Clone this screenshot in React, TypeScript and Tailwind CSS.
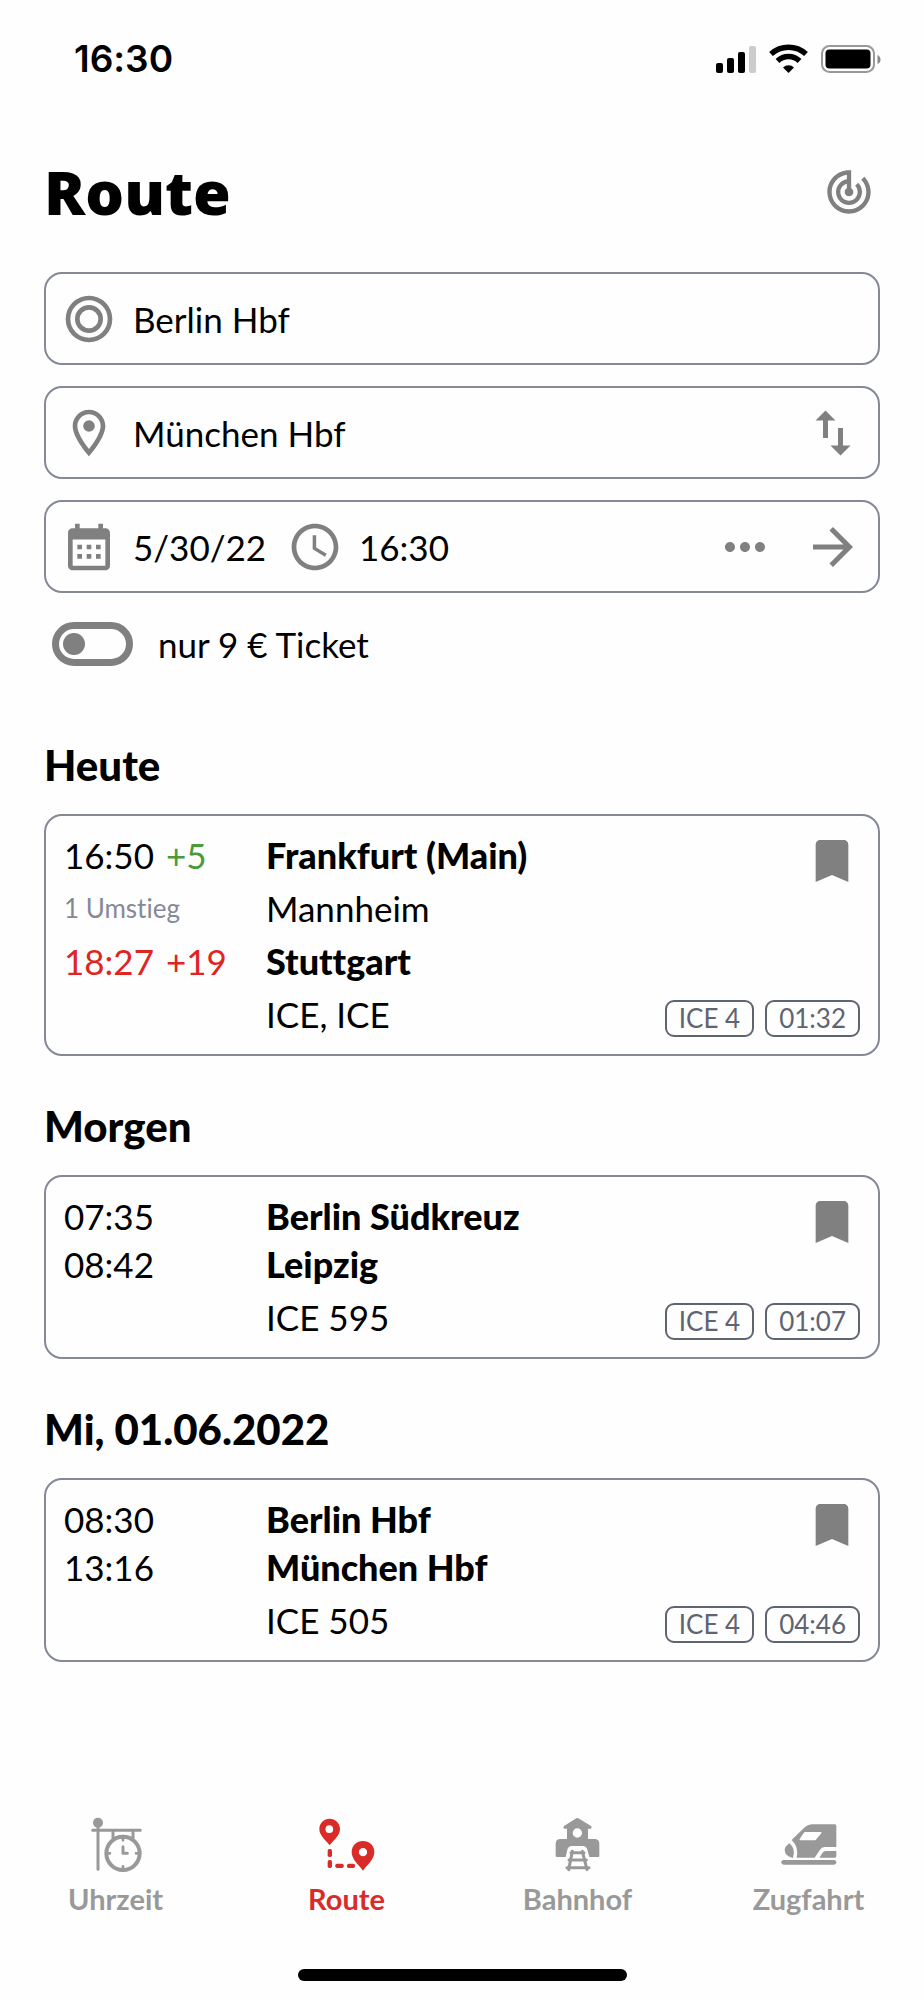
import type { ReactNode } from 'react';

interface Connection {
  departure: string;
  departureDelay?: string;
  from: string;
  changes?: string;
  via?: string;
  arrival: string;
  arrivalDelay?: string;
  to: string;
  trains: string;
  tags: string[];
}

interface Day {
  title: string;
  connections: Connection[];
}

const days: Day[] = [
  {
    title: 'Heute',
    connections: [
      {
        departure: '16:50',
        departureDelay: '+5',
        from: 'Frankfurt (Main)',
        changes: '1 Umstieg',
        via: 'Mannheim',
        arrival: '18:27',
        arrivalDelay: '+19',
        to: 'Stuttgart',
        trains: 'ICE, ICE',
        tags: ['ICE 4', '01:32'],
      },
    ],
  },
  {
    title: 'Morgen',
    connections: [
      {
        departure: '07:35',
        from: 'Berlin Südkreuz',
        arrival: '08:42',
        to: 'Leipzig',
        trains: 'ICE 595',
        tags: ['ICE 4', '01:07'],
      },
    ],
  },
  {
    title: 'Mi, 01.06.2022',
    connections: [
      {
        departure: '08:30',
        from: 'Berlin Hbf',
        arrival: '13:16',
        to: 'München Hbf',
        trains: 'ICE 505',
        tags: ['ICE 4', '04:46'],
      },
    ],
  },
];

function Icon({ className, children }: { className: string; children: ReactNode }) {
  return (
    <svg
      viewBox="0 0 24 24"
      fill="currentColor"
      className={`shrink-0 text-[#808080] ${className}`}
      aria-hidden="true"
    >
      {children}
    </svg>
  );
}

function StatusBar() {
  return (
    <div className="flex h-[118px] items-center justify-between pr-[42px] pl-[74px]">
      <span className="font-[Inter,sans-serif] text-[37px] leading-[44px] font-semibold">16:30</span>
      <svg viewBox="0 0 168 30" className="h-[30px] w-[168px]" aria-hidden="true">
        <rect x="2" y="19" width="7" height="10" rx="2" />
        <rect x="13" y="14" width="7" height="15" rx="2" />
        <rect x="24" y="8" width="7" height="21" rx="2" />
        <rect x="35" y="2" width="7" height="27" rx="2" fill="#ccc" />
        <g fill="none" stroke="#000" strokeWidth="5.500">
          <path d="M57 10a26 26 0 0 1 35 0" />
          <path d="M63.500 17a16 16 0 0 1 22 0" />
        </g>
        <path d="M74.500 29l-5.500-5.500a8 8 0 0 1 11 0z" />
        <rect x="108" y="2" width="52" height="26" rx="7.500" fill="none" stroke="#999" strokeWidth="2" />
        <rect x="111.500" y="5.500" width="45" height="19" rx="4" />
        <path d="M163.500 11v9q3-1.500 3-4.500t-3-4.500z" fill="#888" />
      </svg>
    </div>
  );
}

function Field({ children }: { children: ReactNode }) {
  return (
    <div className="flex h-[93px] items-center rounded-[18px] border-2 border-[#858997] px-[15px]">
      {children}
    </div>
  );
}

function SearchForm() {
  return (
    <form className="flex flex-col gap-[21px]">
      <Field>
        <Icon className="size-14">
          <path d="M12 2a10 10 0 1 0 0 20 10 10 0 0 0 0-20zm0 18a8 8 0 1 1 0-16 8 8 0 0 1 0 16z" />
          <path d="M12 6a6 6 0 1 0 0 12 6 6 0 0 0 0-12zm0 10a4 4 0 1 1 0-8 4 4 0 0 1 0 8z" />
        </Icon>
        <input aria-label="Start" defaultValue="Berlin Hbf" className="ml-4 min-w-0 flex-1 outline-none" />
      </Field>
      <Field>
        <Icon className="size-14">
          <path d="M12 2C8.130 2 5 5.130 5 9c0 5.250 7 13 7 13s7-7.750 7-13c0-3.870-3.130-7-7-7zM7 9c0-2.760 2.240-5 5-5s5 2.240 5 5c0 2.880-2.880 7.190-5 9.880C9.920 16.210 7 11.850 7 9z" />
          <circle cx="12" cy="9" r="2.500" />
        </Icon>
        <input aria-label="Ziel" defaultValue="München Hbf" className="ml-4 min-w-0 flex-1 outline-none" />
        <button type="button" aria-label="Start und Ziel tauschen">
          <Icon className="size-[60px]">
            <path d="M16 17.010V10h-2v7.010h-3L15 21l4-3.990h-3zM9 3L5 6.990h3V14h2V6.990h3L9 3z" />
          </Icon>
        </button>
      </Field>
      <Field>
        <Icon className="size-14">
          <path d="M9 11H7v2h2v-2zm4 0h-2v2h2v-2zm4 0h-2v2h2v-2zM9 15H7v2h2v-2zm4 0h-2v2h2v-2zm4 0h-2v2h2v-2zm2-11h-1V2h-2v2H8V2H6v2H5c-1.110 0-1.990.9-1.990 2L3 20c0 1.100.89 2 2 2h14c1.100 0 2-.9 2-2V6c0-1.100-.9-2-2-2zm0 16H5V8.800h14V20z" />
        </Icon>
        <input aria-label="Datum" defaultValue="5/30/22" className="ml-4 w-[154px] outline-none" />
        <Icon className="size-14">
          <path d="M11.990 2C6.470 2 2 6.480 2 12s4.470 10 9.990 10C17.520 22 22 17.520 22 12S17.520 2 11.990 2zM12 20c-4.420 0-8-3.580-8-8s3.580-8 8-8 8 3.580 8 8-3.580 8-8 8zm.5-13H11v6l5.250 3.150.75-1.230-4.500-2.670z" />
        </Icon>
        <input aria-label="Uhrzeit" defaultValue="16:30" className="ml-4 w-[120px] outline-none" />
        <button type="button" aria-label="Mehr Optionen" className="ml-auto">
          <Icon className="size-[60px]">
            <path d="M6 10c-1.100 0-2 .9-2 2s.9 2 2 2 2-.9 2-2-.9-2-2-2zm12 0c-1.100 0-2 .9-2 2s.9 2 2 2 2-.9 2-2-.9-2-2-2zm-6 0c-1.100 0-2 .9-2 2s.9 2 2 2 2-.9 2-2-.9-2-2-2z" />
          </Icon>
        </button>
        <button type="button" aria-label="Suchen" className="ml-7">
          <Icon className="size-[60px]">
            <path d="M12 4l-1.410 1.410L16.170 11H4v2h12.170l-5.580 5.590L12 20l8-8z" />
          </Icon>
        </button>
      </Field>
      <label className="mt-2 ml-2 flex items-center gap-[25px]">
        <input
          type="checkbox"
          role="switch"
          className="flex h-11 w-[81px] appearance-none items-center rounded-full border-[7px] border-[#808080] pl-1 before:size-[22px] before:rounded-full before:bg-[#808080] checked:justify-end checked:pr-1"
        />
        nur 9 € Ticket
      </label>
    </form>
  );
}

function ConnectionCard({ connection }: { connection: Connection }) {
  const c = connection;
  return (
    <article className="flex rounded-[18px] border-2 border-[#858997] pl-[18px]">
      <div className="grid flex-1 grid-cols-[202px_1fr] content-start pt-[15px] pb-4 leading-[48px]">
        <span className="flex gap-3">
          {c.departure}
          {c.departureDelay && <span className="text-[#4b9a38]">{c.departureDelay}</span>}
        </span>
        <span className="font-['Lato_Black',Lato,sans-serif] text-[36px] font-black">{c.from}</span>
        {c.via && (
          <>
            <span className="my-[5px] text-[26px] text-[#858997]">{c.changes}</span>
            <span className="my-[5px]">{c.via}</span>
          </>
        )}
        <span className={c.arrivalDelay ? 'flex gap-3 text-[#e02422]' : 'flex gap-3'}>
          {c.arrival}
          {c.arrivalDelay && <span>{c.arrivalDelay}</span>}
        </span>
        <span className="font-['Lato_Black',Lato,sans-serif] text-[36px] font-black">{c.to}</span>
        <span className="col-start-2 mt-[5px]">{c.trains}</span>
      </div>
      <div className="flex flex-col items-end justify-between py-[17px] pr-[18px]">
        <button type="button" aria-label="Merken">
          <Icon className="size-14">
            <path d="M17 3H7c-1.100 0-2 .9-2 2v16l7-3 7 3V5c0-1.100-.9-2-2-2z" />
          </Icon>
        </button>
        <div className="flex gap-[11px] text-[26px] leading-[33px] text-[#5f6471]">
          {c.tags.map((tag) => (
            <span key={tag} className="rounded-[9px] border-2 border-[#5f6471] px-3">
              {tag}
            </span>
          ))}
        </div>
      </div>
    </article>
  );
}

function ClockIcon() {
  return (
    <g fill="none" stroke="currentColor" strokeWidth="9" strokeLinecap="round" strokeLinejoin="round">
      <circle cx="30" cy="17" r="15" fill="currentColor" stroke="none" />
      <path d="M30 17v140M14 40h143" />
      <path d="M75 44v18M135 44v18" />
      <circle cx="105" cy="109" r="50" strokeWidth="12" />
      <path d="M105 65v5M105 148v5M61 109h5M144 109h5" strokeWidth="8" />
      <path d="M105 89v20h13" />
    </g>
  );
}

function RouteIcon() {
  return (
    <g fill="currentColor">
      <path
        fillRule="evenodd"
        d="M32 5C15 5 1 18 1 36c0 20 18 32 31 49 13-17 31-29 31-49C63 18 49 5 32 5zm-1 20a11.500 11.500 0 1 1 0 23 11.500 11.500 0 0 1 0-23z"
      />
      <path
        fillRule="evenodd"
        d="M132 72c-19 0-34 14-34 33 0 22 20 37 34 56 14-19 34-34 34-56 0-19-15-33-34-33zm0 21a12.500 12.500 0 1 1 0 25 12.500 12.500 0 0 1 0-25z"
      />
      <rect x="26" y="96" width="13" height="24" rx="5" />
      <rect x="26" y="129" width="13" height="24" rx="5" />
      <rect x="49" y="140" width="25" height="13" rx="5" />
      <rect x="84" y="140" width="24" height="13" rx="5" />
    </g>
  );
}

function StationIcon() {
  return (
    <>
      <path
        fill="currentColor"
        fillRule="evenodd"
        d="M79 4q3-2 6 0l38 23q4 4 0 8h-9v31h19q15 0 15 15v36q0 3-3 3h-27l-6-22q-3-11-14-11H66q-11 0-14 11l-5 22H20q-3 0-3-3V81q0-15 15-15h19V35h-9q-4-4 0-8zM82 34a14 14 0 1 0 0 28 14 14 0 0 0 0-28z"
      />
      <g fill="none" stroke="currentColor" strokeWidth="9" strokeLinecap="round">
        <path d="M67 103L56 158M97 103l14 55" />
        <path d="M63 107h39M57 129h52M51 152h66" />
      </g>
    </>
  );
}

function TrainIcon() {
  return (
    <g fill="currentColor">
      <path
        fillRule="evenodd"
        d="M32 69l36-35q12-12 27-12h66q5 0 5 5v63h-35q-9 0-14 8l-16 24H47q7-32-15-53zM73 45q-3 0-5 3L56 66q-2 4 3 4h42q3 0 5-3l15-18q2-4-2-4z"
      />
      <path d="M166 102h-32q-6 0-9 5l-10 15h47q4 0 4-4z" />
      <path d="M25 79q20 15 11 44-25-6-25-24 0-10 14-20z" />
      <rect x="1" y="129" width="165" height="14" rx="7" />
    </g>
  );
}

const tabs = [
  { label: 'Uhrzeit', icon: <ClockIcon /> },
  { label: 'Route', icon: <RouteIcon />, active: true },
  { label: 'Bahnhof', icon: <StationIcon /> },
  { label: 'Zugfahrt', icon: <TrainIcon /> },
];

function TabBar() {
  return (
    <nav className="mt-auto grid grid-cols-4 pt-12 pb-[52px]">
      {tabs.map((tab) => (
        <a
          key={tab.label}
          href="#"
          className={`flex flex-col items-center gap-2 text-[29px] leading-9 font-bold ${
            tab.active ? 'text-[#d92b27]' : 'text-[#999]'
          }`}
        >
          <svg viewBox="0 0 168 168" className="size-14" aria-hidden="true">
            {tab.icon}
          </svg>
          {tab.label}
        </a>
      ))}
    </nav>
  );
}

export default function App() {
  return (
    <div className="flex min-h-screen flex-col bg-[#fefefe] font-[Lato,sans-serif] text-[35px] leading-[42px] text-black [font-variant-ligatures:none]">
      <StatusBar />
      <main className="px-11">
        <header className="mt-[38px] mb-11 flex items-center justify-between pr-[5px]">
          <h1 className="font-['Open_Sans',sans-serif] text-[61px] leading-[72px] font-extrabold">Route</h1>
          <button type="button" aria-label="Radar">
            <Icon className="size-[52px]">
              <path d="M19.070 4.930l-1.410 1.410C19.100 7.790 20 9.790 20 12c0 4.420-3.580 8-8 8s-8-3.580-8-8c0-4.080 3.050-7.440 7-7.930v2.020C8.160 6.570 6 9.030 6 12c0 3.310 2.690 6 6 6s6-2.690 6-6c0-1.660-.67-3.160-1.760-4.240l-1.410 1.410C15.550 9.900 16 10.900 16 12c0 2.210-1.790 4-4 4s-4-1.790-4-4c0-1.860 1.280-3.410 3-3.860v2.140c-.6.350-1 .98-1 1.720 0 1.100.9 2 2 2s2-.9 2-2c0-.74-.4-1.380-1-1.720V2h-1C6.480 2 2 6.480 2 12s4.480 10 10 10 10-4.480 10-10c0-2.760-1.120-5.260-2.930-7.070z" />
            </Icon>
          </button>
        </header>
        <SearchForm />
        <div className="mt-[73px] flex flex-col gap-11">
          {days.map((day) => (
            <section key={day.title}>
              <h2 className="mb-[23px] font-['Lato_Black',Lato,sans-serif] text-[42px] leading-[52px] font-black">{day.title}</h2>
              {day.connections.map((connection) => (
                <ConnectionCard key={connection.departure} connection={connection} />
              ))}
            </section>
          ))}
        </div>
      </main>
      <TabBar />
      <div className="mx-auto mb-[19px] h-3 w-[329px] rounded-full bg-black" />
    </div>
  );
}
